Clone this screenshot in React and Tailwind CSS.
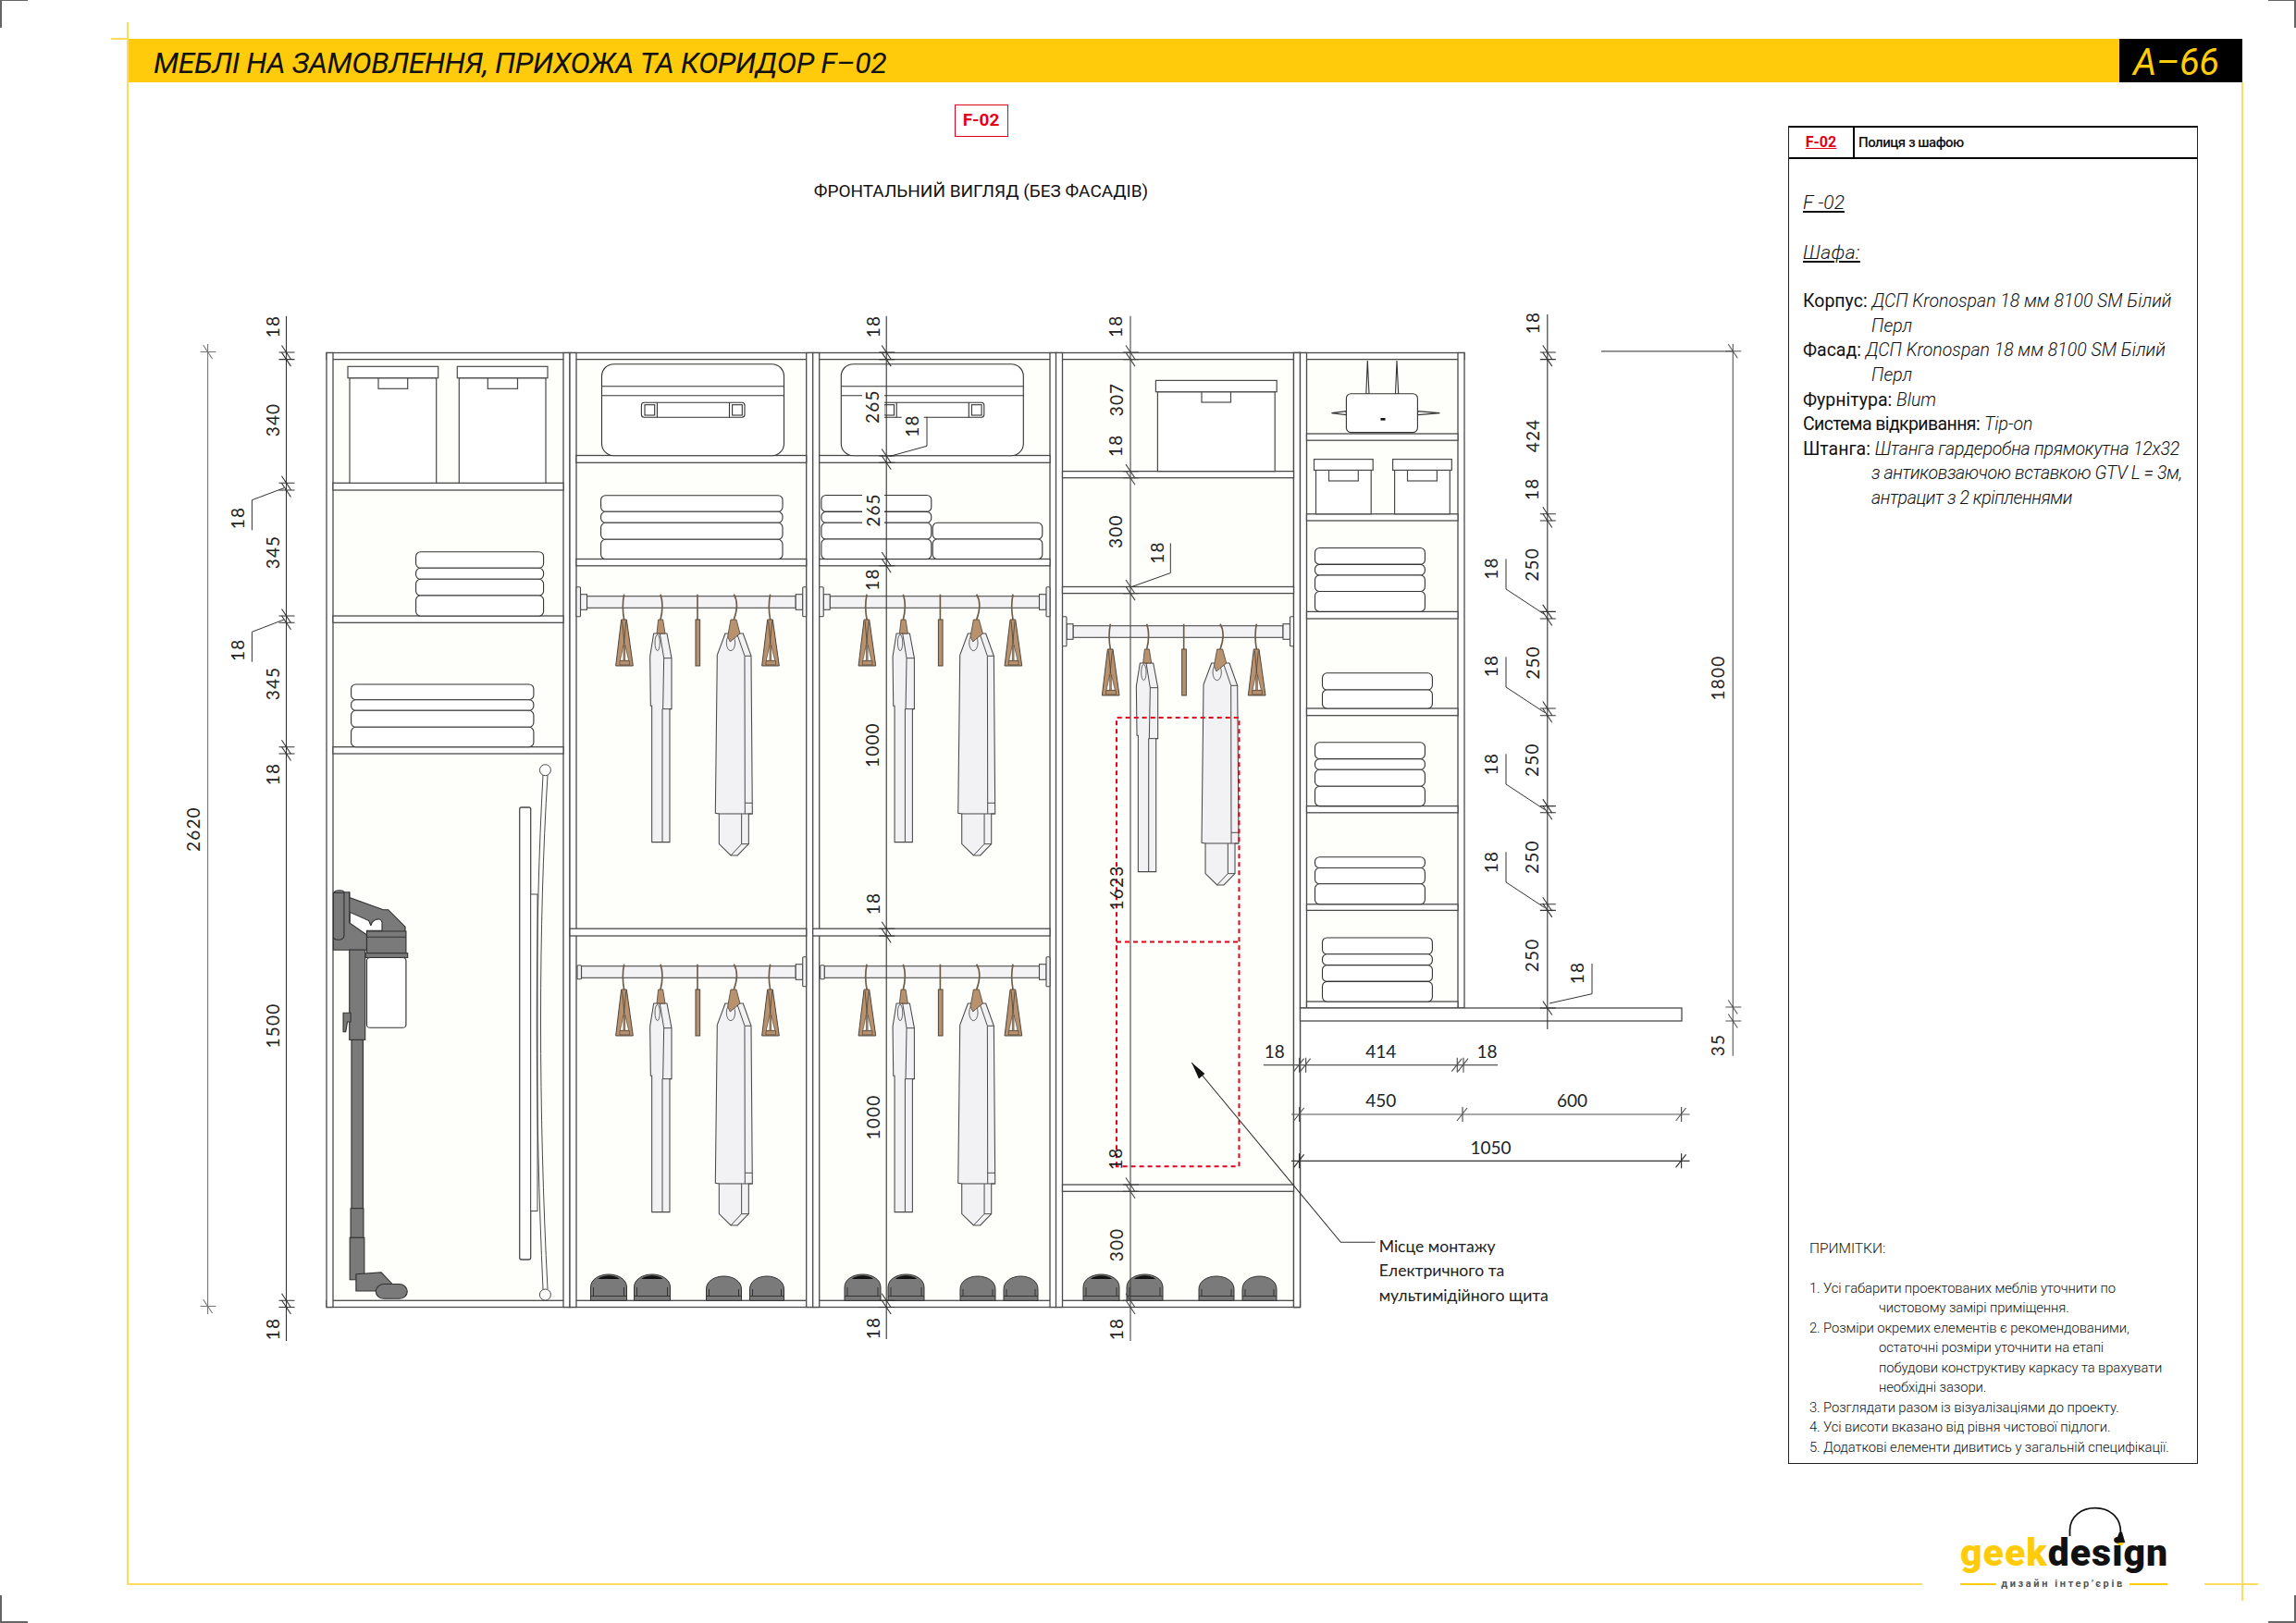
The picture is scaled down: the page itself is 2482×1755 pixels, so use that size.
const INK = '#4a4a4a';
const CREAM = '#fefefa';

const notes = [
  ['1. Усі габарити проектованих меблів уточнити по', 'чистовому замірі приміщення.'],
  ['2. Розміри окремих елементів є рекомендованими,', 'остаточні розміри уточнити на етапі', 'побудови конструктиву каркасу та врахувати', 'необхідні зазори.'],
  ['3. Розглядати разом із візуалізаціями до проекту.'],
  ['4. Усі висоти вказано від рівня чистової підлоги.'],
  ['5. Додаткові елементи дивитись у загальній специфікації.'],
];

const Panel = ({ x1, x2, y1, y2 }) => (
  <rect x={x1} y={y1} width={x2 - x1} height={y2 - y1} fill="#fff" stroke={INK} strokeWidth="1.3" />
);

// shelf between two side panels
const Shelf = ({ x1, x2, y1, y2 }) => <Panel x1={x1} x2={x2} y1={y1} y2={y2} />;

const Towels = ({ x1, x2, ys }) => (
  <g fill="#fff" stroke="#333" strokeWidth="1.1">
    {ys.slice(0, -1).map((y, i) => (
      <rect key={i} x={x1} y={y} width={x2 - x1} height={ys[i + 1] - y} rx="5" />
    ))}
  </g>
);

const Box = ({ x1, x2, top, lidBottom, tabBottom, bottom, tabA, tabB }) => (
  <g fill="#fff" stroke={INK} strokeWidth="1.2">
    <rect x={x1 + 2} y={lidBottom} width={x2 - x1 - 4} height={bottom - lidBottom} />
    <rect x={tabA} y={lidBottom} width={tabB - tabA} height={tabBottom - lidBottom} />
    <rect x={x1} y={top} width={x2 - x1} height={lidBottom - top} />
  </g>
);

const Suitcase = ({ dx }) => (
  <g transform={`translate(${dx} 0)`} fill="#fff" stroke="#333" strokeWidth="1.1">
    <rect x="650.5" y="393.7" width="197" height="99" rx="13" />
    <path d="M650.5 417.7H847.5M650.5 427.7H847.5" />
    <rect x="693.4" y="435.3" width="111.6" height="16" rx="3" />
    <path d="M710.4 435.3V451.3M788.5 435.3V451.3" />
    <rect x="697" y="437.7" width="10.7" height="11.3" />
    <rect x="791.6" y="437.7" width="10.7" height="11.3" />
  </g>
);

const Rail = ({ L, R, y, plain }) => (
  <g fill="#f3f3f5" stroke={INK} strokeWidth="1.1">
    {plain ? (
      <>
        <rect x={L + 5.5} y={y} width={R - L - 17} height="12.6" />
        <rect x={L + 1} y={y - 1} width="4.5" height="15" rx="1" />
      </>
    ) : (
      <>
        <rect x={L + 11.5} y={y} width={R - L - 23} height="12.6" />
        <rect x={L + 4.5} y={y - 2} width="7" height="16.6" />
        <rect x={L} y={y - 10} width="4.5" height="32" rx="1" />
      </>
    )}
    <rect x={R - 11.5} y={y - 2} width="7.5" height="16.6" />
    <rect x={R - 4} y={y - 10} width="4" height="32" rx="1" />
  </g>
);

const Wishbone = ({ x }) => (
  <g transform={`translate(${x} 0)`}>
    <path d="M0 68C-5 92-6 118 0 150" fill="none" stroke="#6f5c48" strokeWidth="5" />
    <path d="M-9 150H8L29 300H-27Z" fill="#b8926f" stroke="#4f4438" strokeWidth="3" />
    <path d="M-13 283H-2L-2 232ZM3 283H15L3 232Z" fill={CREAM} stroke="#4f4438" strokeWidth="2" />
    <path d="M-14 284H18V297H-14Z" fill="#b8926f" stroke="#4f4438" strokeWidth="2" />
    <path d="M-6 155L1 230M6 155L-1 230" fill="none" stroke="#4f4438" strokeWidth="2.5" />
  </g>
);

// one hanging set, drawn in 3x coordinates around the upper rail of column 2
const Hangers = ({ dx, dy }) => (
  <g transform={`translate(${640 + dx} ${620 + dy}) scale(0.3333)`}>
    <Wishbone x={104} />
    <path d="M222 68C230 92 230 118 222 150" fill="none" stroke="#6f5c48" strokeWidth="5" />
    <path d="M200 195L188 270 190 430H194V872H252V440H258V275L243 195Z" fill="#f2f2f4" stroke={INK} strokeWidth="3.2" />
    <path d="M220 195L233 275 230 440M228 440V872M233 275H258M228 440H258" fill="none" stroke={INK} strokeWidth="3" />
    <ellipse cx="212" cy="225" rx="8" ry="26" fill="#f2f2f4" stroke={INK} strokeWidth="2.5" />
    <path d="M215 150H230L237 195H210Z" fill="#b8926f" stroke="#4f4438" strokeWidth="2.5" />
    <path d="M342 68V150" stroke="#6f5c48" strokeWidth="5" />
    <rect x="336" y="150" width="14" height="150" fill="#b8926f" stroke="#4f4438" strokeWidth="3" />
    <path d="M460 68C474 92 472 118 460 150" fill="none" stroke="#6f5c48" strokeWidth="5" />
    <path d="M432 195L406 265 400 778 412 780V878L450 915H472L508 878V780H520L516 268 490 195Z" fill="#f2f2f4" stroke={INK} strokeWidth="3.2" />
    <path d="M470 195L495 268 496 780M496 745H520M485 780V878L450 915M485 878H508M496 268H516M412 780H520" fill="none" stroke={INK} strokeWidth="3" />
    <ellipse cx="450" cy="225" rx="14" ry="26" fill="#f2f2f4" stroke={INK} strokeWidth="2.5" />
    <path d="M450 150H468L480 195 448 222 440 205Z" fill="#b8926f" stroke="#4f4438" strokeWidth="2.5" />
    <Wishbone x={578} />
  </g>
);

const Shoe = ({ x, w, top, black }) => (
  <g transform={`translate(${x} 0)`}>
    <path d={`M0 1406.3V${top + 14}C0 ${top + 5} ${w * 0.25} ${top} ${w / 2} ${top}S${w} ${top + 5} ${w} ${top + 14}V1406.3Z`} fill="#7a7a7a" stroke="#333" strokeWidth="1" />
    {black && <path d={`M${w * 0.2} ${top + 5}C${w * 0.35} ${top} ${w * 0.65} ${top} ${w * 0.8} ${top + 5}Z`} fill="#111" />}
    <path d={`M3 ${top + 14}V1401M${w - 3} ${top + 14}V1401M0 1401.5H${w}`} fill="none" stroke="#333" strokeWidth="1" />
  </g>
);

const Shoes = ({ x }) => (
  <>
    <Shoe x={x} w={39} top={1378} black />
    <Shoe x={x + 47} w={39} top={1378} black />
    <Shoe x={x + 125} w={38} top={1380} />
    <Shoe x={x + 172} w={37} top={1380} />
  </>
);

const Vacuum = () => (
  <g transform="translate(180 850) scale(0.4464 0.3954)" stroke="#333" strokeWidth="2.6" fill="#7a7a7a">
    <path d="M404 292C410 282 428 284 430 290L443 290V305L525 338H537L578 385V400H485V448H404Z" />
    <path d="M444 345L490 368 495 382C497 366 518 356 522 372V395H485V407L444 375Z" fill="#fff" />
    <path d="M404 292H430V410C428 422 410 424 404 415M443 290V375" fill="none" />
    <rect x="443" y="448" width="38" height="246" />
    <path d="M428 620H446V645H438L434 672H428Z" />
    <rect x="448" y="694" width="28" height="461" />
    <rect x="446" y="1155" width="31" height="80" />
    <rect x="444" y="1235" width="35" height="115" />
    <path d="M459 1335L520 1330 547 1362 520 1381H459Z" />
    <rect x="507" y="1362" width="76" height="40" rx="20" />
    <rect x="485" y="397" width="95" height="60" />
    <path d="M485 413H580" fill="none" />
    <rect x="482" y="457" width="102" height="12" />
    <rect x="485" y="469" width="95" height="192" rx="8" fill="#fff" />
  </g>
);

const Mop = () => (
  <g fill="none" stroke={INK} strokeWidth="1">
    <rect x="561.7" y="873" width="12" height="489" rx="2" fill="#fff" strokeWidth="1.3" />
    <rect x="573.7" y="967" width="7.3" height="342.5" fill="#fff" />
    <path d="M587 838C578 1000 578 1200 587 1394M592 838C582 1000 582 1200 592 1394" />
    <circle cx="589.4" cy="832.7" r="6" fill="#fff" />
    <circle cx="589.4" cy="1400" r="6" fill="#fff" />
  </g>
);

// dimension text, rotated or flat, with optional knock-out behind it
const Dim = ({ x, y, children, flat, halo }) => {
  const len = String(children).length * 12 + 4;
  return (
    <g>
      {halo && <rect x={x - 11} y={y - len / 2} width="24" height={len} fill={CREAM} />}
      <text
        x={x}
        y={y}
        transform={flat ? undefined : `rotate(-90 ${x} ${y})`}
        textAnchor="middle"
        dominantBaseline="central"
        fontSize="19"
        letterSpacing={flat ? 0 : 1.2}
        fill="#222"
      >
        {children}
      </text>
    </g>
  );
};

const VDim = ({ x, y1, y2, ticks, stroke = '#333' }) => (
  <g stroke={stroke} strokeWidth="1.1" fill="none">
    <path d={`M${x} ${y1}V${y2}`} />
    {ticks.map((t) => (
      <path key={t} d={`M${x - 8} ${t}H${x + 9}M${x - 5} ${t - 7.5}L${x + 5} ${t + 7.5}`} />
    ))}
  </g>
);

const HDim = ({ y, x1, x2, ticks, stroke = '#333' }) => (
  <g stroke={stroke} strokeWidth="1.2" fill="none">
    <path d={`M${x1} ${y}H${x2}`} />
    {ticks.map((t) => (
      <path key={t} d={`M${t} ${y - 8}V${y + 8}M${t - 6} ${y + 7}L${t + 5} ${y - 7}`} />
    ))}
  </g>
);

const Leader = ({ d }) => <path d={d} fill="none" stroke="#333" strokeWidth="1" />;

const Drawing = () => (
  <svg viewBox="190 330 1710 1130" className="block h-[1130px] w-[1710px]" style={{ fontFamily: 'Lato, Roboto, sans-serif' }}>
    {/* carcass */}
    <rect x="353" y="381.5" width="1052.5" height="1032" fill={CREAM} />
    <rect x="1405.5" y="381.5" width="177.5" height="708.5" fill={CREAM} />
    <Panel x1={353} x2={1405.5} y1={381.5} y2={388.6} />
    <Panel x1={1405.5} x2={1583} y1={381.5} y2={388.6} />
    <Panel x1={353} x2={1405.5} y1={1406.3} y2={1413.5} />
    {[353, 609, 616, 871.7, 878.7, 1135, 1141.5, 1398.5].map((x) => (
      <Panel key={x} x1={x} x2={x + 7} y1={381.5} y2={1413.5} />
    ))}
    <Panel x1={1398.5} x2={1405.5} y1={381.5} y2={1413.5} />
    <Panel x1={1405.5} x2={1412.5} y1={381.5} y2={1090} />
    <Panel x1={1576} x2={1583} y1={381.5} y2={1090} />

    {/* shelves */}
    {[[522.3, 530], [666, 673.3], [807.7, 815]].map(([a, b]) => (
      <Shelf key={a} x1={360} x2={609} y1={a} y2={b} />
    ))}
    {[[492.5, 500.3], [604.5, 611.8]].map(([a, b]) => (
      <g key={a}>
        <Shelf x1={623} x2={871.7} y1={a} y2={b} />
        <Shelf x1={885.7} x2={1135} y1={a} y2={b} />
      </g>
    ))}
    <Shelf x1={616} x2={871.7} y1={1004.2} y2={1012} />
    <Shelf x1={878.7} x2={1135} y1={1004.2} y2={1012} />
    {[[509.6, 516.7], [634.5, 641.6], [1281, 1288.3]].map(([a, b]) => (
      <Shelf key={a} x1={1148.5} x2={1398.5} y1={a} y2={b} />
    ))}
    {[[469, 476.2], [555.8, 563], [661.4, 669], [766, 773.7], [871.6, 878.8], [977.8, 984.4], [1083, 1090]].map(([a, b]) => (
      <Shelf key={a} x1={1412.5} x2={1576} y1={a} y2={b} />
    ))}
    <Panel x1={1405.5} x2={1818} y1={1090} y2={1104} />

    {/* column 1 */}
    <Box x1={376} x2={473.7} top={396.3} lidBottom={408.7} tabBottom={420.3} bottom={522.3} tabA={409} tabB={440.7} />
    <Box x1={494.3} x2={592} top={396.3} lidBottom={408.7} tabBottom={420.3} bottom={522.3} tabA={527.3} tabB={559.5} />
    <Towels x1={449.6} x2={587.6} ys={[596.7, 614.3, 626.3, 644, 666]} />
    <Towels x1={379.6} x2={576.9} ys={[740, 756.7, 768.3, 786.3, 807.7]} />
    <Mop />
    <Vacuum />

    {/* columns 2 and 3 */}
    <Suitcase dx={0} />
    <Suitcase dx={258.8} />
    <Towels x1={649.6} x2={846} ys={[535.7, 553.3, 565.3, 583.3, 604.5]} />
    <Towels x1={887.9} x2={1006.8} ys={[535.5, 553.4, 565.3, 583, 604.5]} />
    <Towels x1={1008.2} x2={1126.8} ys={[565.3, 583, 604.5]} />
    <Rail L={623} R={871.7} y={644.7} />
    <Rail L={885.7} R={1135} y={644.7} />
    <Rail L={623} R={871.7} y={1044.7} plain />
    <Rail L={885.7} R={1135} y={1044.7} plain />
    <Hangers dx={0} dy={0} />
    <Hangers dx={262.4} dy={0} />
    <Hangers dx={0} dy={400} />
    <Hangers dx={262.4} dy={400} />

    {/* column 4 */}
    <Box x1={1249.4} x2={1380.2} top={411.4} lidBottom={423.7} tabBottom={435} bottom={509.6} tabA={1299} tabB={1330.5} />
    <Rail L={1148.5} R={1398.5} y={676.7} />
    <Hangers dx={525.7} dy={32} />

    {/* column 5 */}
    <g fill="#fff" stroke="#333" strokeWidth="1.1">
      <path d="M1476.8 426L1478.3 390 1480 426ZM1508.5 426L1510 390 1511.7 426ZM1455.4 444.6L1439.5 446.6 1455.4 448.6ZM1532.5 444.6L1556.4 446.6 1532.5 448.6Z" />
      <rect x="1455.4" y="425.7" width="77" height="41.9" rx="5" />
    </g>
    <rect x="1492.5" y="452" width="5" height="2.6" fill="#111" />
    <Box x1={1420.5} x2={1484.2} top={496.6} lidBottom={508.4} tabBottom={520} bottom={555.8} tabA={1436.5} tabB={1468.3} />
    <Box x1={1505.6} x2={1569.3} top={496.6} lidBottom={508.4} tabBottom={520} bottom={555.8} tabA={1521.5} tabB={1553.4} />
    <Towels x1={1421.5} x2={1540.4} ys={[592.5, 610.4, 622, 639.5, 661.4]} />
    <Towels x1={1429.5} x2={1548.4} ys={[727.8, 746, 766]} />
    <Towels x1={1421.5} x2={1540.4} ys={[802.8, 820.6, 832.3, 850.2, 871.6]} />
    <Towels x1={1421.5} x2={1540.4} ys={[926.7, 938.5, 955.8, 977.8]} />
    <Towels x1={1429.5} x2={1548.4} ys={[1014, 1031.8, 1043.6, 1061.4, 1083]} />

    {/* shoes */}
    <Shoes x={638.5} />
    <Shoes x={913} />
    <Shoes x={1171} />

    {/* panel niche marked in red */}
    <path d="M1207 1261.3V776H1339.5V1261.3ZM1207 1018.6H1339.5" fill="none" stroke="#e4001b" strokeWidth="2" strokeDasharray="5 4" />

    {/* dimensions: left */}
    <VDim x={224.6} y1={372} y2={1421} ticks={[380.5, 1412.5]} stroke="#777" />
    <VDim x={309.5} y1={341.7} y2={1450} ticks={[381, 388.6, 522.3, 530, 666, 673.3, 807.7, 815, 1406.3, 1413.5]} />
    <Leader d="M307 527.7L272.4 540.7V573.3" />
    <Leader d="M307 670L272.4 683.3V715.7" />
    <Dim x={209} y={896.6}>2620</Dim>
    <Dim x={294} y={353}>18</Dim>
    <Dim x={294} y={454}>340</Dim>
    <Dim x={294} y={597}>345</Dim>
    <Dim x={294} y={739}>345</Dim>
    <Dim x={294} y={837}>18</Dim>
    <Dim x={294} y={1109}>1500</Dim>
    <Dim x={294} y={1437}>18</Dim>
    <Dim x={256.8} y={560}>18</Dim>
    <Dim x={256.8} y={702.7}>18</Dim>

    {/* column 3 */}
    <VDim x={958.2} y1={341.7} y2={1448} ticks={[381, 388.6, 493, 500.3, 604.5, 611.8, 1004.2, 1012, 1406.3, 1413.5]} />
    <Leader d="M961.8 493.4L1002 482.3V450.7" />
    <Dim x={943} y={353}>18</Dim>
    <Dim x={943} y={439.6} halo>265</Dim>
    <Dim x={943} y={551.5} halo>265</Dim>
    <Dim x={943} y={626.6}>18</Dim>
    <Dim x={943} y={805.6}>1000</Dim>
    <Dim x={943} y={977}>18</Dim>
    <Dim x={943} y={1208}>1000</Dim>
    <Dim x={943} y={1436}>18</Dim>
    <Dim x={985.7} y={460.6} halo>18</Dim>

    {/* column 4 */}
    <VDim x={1222} y1={341.7} y2={1450} ticks={[381, 388.6, 509.6, 516.7, 634.5, 641.6, 1281, 1288.3, 1406.3, 1413.5]} stroke="#444" />
    <Leader d="M1222 635L1265.3 619.6V587.4" />
    <Dim x={1206} y={352.8}>18</Dim>
    <Dim x={1206} y={432}>307</Dim>
    <Dim x={1206} y={481.8}>18</Dim>
    <Dim x={1206} y={574.7}>300</Dim>
    <Dim x={1206} y={960}>1623</Dim>
    <Dim x={1206} y={1252.7}>18</Dim>
    <Dim x={1206} y={1346}>300</Dim>
    <Dim x={1206} y={1437}>18</Dim>
    <Dim x={1250.4} y={597.6}>18</Dim>

    {/* column 5 */}
    <VDim x={1672.8} y1={340} y2={1113} ticks={[381, 388.6, 555.8, 563, 661.4, 669, 766, 773.7, 871.6, 878.8, 977.8, 984.4, 1090]} />
    {[0, 106, 211, 317].map((o) => (
      <Leader key={o} d={`M1628 ${604.3 + o}V${637 + o}L1669.8 ${664.5 + o}`} />
    ))}
    <Leader d="M1674.8 1085L1721 1074.7V1042" />
    <Dim x={1656} y={349}>18</Dim>
    <Dim x={1656} y={471}>424</Dim>
    <Dim x={1656} y={528.8}>18</Dim>
    <Dim x={1656} y={610.4}>250</Dim>
    <Dim x={1656} y={716.5}>250</Dim>
    <Dim x={1656} y={821.6}>250</Dim>
    <Dim x={1656} y={926.7}>250</Dim>
    <Dim x={1656} y={1032.8}>250</Dim>
    <Dim x={1611.6} y={614.5}>18</Dim>
    <Dim x={1611.6} y={720}>18</Dim>
    <Dim x={1611.6} y={826}>18</Dim>
    <Dim x={1611.6} y={932}>18</Dim>
    <Dim x={1704.6} y={1052}>18</Dim>

    {/* overall height */}
    <g stroke="#555" strokeWidth="1.2" fill="none">
      <path d="M1731 379.8H1873.3" />
    </g>
    <VDim x={1873.3} y1={372} y2={1141.7} ticks={[379.8, 1089, 1104]} stroke="#555" />
    <Dim x={1856} y={733}>1800</Dim>
    <Dim x={1856} y={1130}>35</Dim>

    {/* horizontal dimensions */}
    <HDim y={1151.7} x1={1365.8} x2={1619} ticks={[1404.6, 1411.6, 1575.3, 1582]} stroke="#555" />
    <HDim y={1205} x1={1396} x2={1826.5} ticks={[1404.6, 1581, 1817.6]} stroke="#555" />
    <HDim y={1255.3} x1={1396} x2={1826.5} ticks={[1404.6, 1817.6]} />
    <Dim flat x={1377.8} y={1136}>18</Dim>
    <Dim flat x={1492.7} y={1136}>414</Dim>
    <Dim flat x={1607.6} y={1136}>18</Dim>
    <Dim flat x={1492.7} y={1189}>450</Dim>
    <Dim flat x={1699.6} y={1189}>600</Dim>
    <Dim flat x={1611.6} y={1240}>1050</Dim>

    {/* callout */}
    <path d="M1288.2 1149L1449.4 1343.3H1486.7" fill="none" stroke="#333" strokeWidth="1.1" />
    <path d="M1288.2 1149L1302.4 1161 1296 1166.4Z" fill="#111" />
    <g fontSize="17.6" fill="#222">
      <text x="1490.7" y="1354">Місце монтажу</text>
      <text x="1490.7" y="1380">Електричного та</text>
      <text x="1490.7" y="1407">мультимідійного щита</text>
    </g>
  </svg>
);

const Logo = () => (
  <div className="relative ml-[186px] mt-[46px] h-[100px] w-[224px]">
    <svg viewBox="0 0 224 100" className="absolute left-0 top-0 h-[100px] w-[224px]">
      <path d="M118.5 32V26C118.5 10 132 1.7 146 1.7S173.5 10 173.5 28" fill="none" stroke="#111" strokeWidth="1.8" />
      <path d="M172 27.7H175L178.3 39H167.7Z" fill="#111" />
      <path d="M168.5 39H177.5L175 42H171Z" fill="#ffcb0a" />
    </svg>
    <div className="absolute left-0 top-[27px] flex text-[41px] font-black leading-[46px] tracking-[1px]" style={{ fontFamily: 'Roboto, sans-serif' }}>
      <span className="text-[#ffcb0a]">geek</span>
      <span className="text-[#111]">design</span>
    </div>
    <div className="absolute left-0 top-[77px] flex w-[224px] items-center justify-between">
      <span className="h-[1.5px] w-[39px] bg-[#ffcb0a]" />
      <span className="whitespace-nowrap text-[11px] font-bold leading-[14px] tracking-[2.6px] text-[#555]">дизайн інтер’єрів</span>
      <span className="h-[1.5px] w-[41px] bg-[#ffcb0a]" />
    </div>
  </div>
);

const App = () => (
  <div className="relative h-[1755px] w-[2482px] overflow-hidden bg-white font-['Roboto',sans-serif] text-[#111]">
    {/* sheet frame and crop marks */}
    <div className="absolute left-0 top-0 h-[30px] w-[30px] border-l-2 border-t border-[#666]" />
    <div className="absolute right-0 top-0 h-[30px] w-[30px] border-r-2 border-t border-[#666]" />
    <div className="absolute bottom-0 left-0 h-[30px] w-[30px] border-b-2 border-l-2 border-[#666]" />
    <div className="absolute bottom-0 right-0 h-[30px] w-[30px] border-b-2 border-r-2 border-[#666]" />
    <div className="absolute left-[137px] top-[24px] h-[1689px] w-[2px] bg-[#fedb5e]" />
    <div className="absolute left-[120px] top-[41px] h-[2px] w-[18px] bg-[#fedb5e]" />
    <div className="absolute left-[137px] top-[1712px] h-[2px] w-[1941px] bg-[#fedb5e]" />
    <div className="absolute left-[2383px] top-[1712px] h-[2px] w-[58px] bg-[#fedb5e]" />
    <div className="absolute left-[2423px] top-[89px] h-[1642px] w-[2px] bg-[#fedb5e]" />

    <div className="flex h-full flex-col pl-[138px] pr-[58px] pt-[42px]">
      <header className="flex h-[47px] items-stretch justify-between bg-[#ffcb0a]">
        <h1 className="pl-[28px] pt-[3px] text-[32px] font-normal italic leading-[47px] tracking-[-0.4px] text-[#111]">
          МЕБЛІ НА ЗАМОВЛЕННЯ, ПРИХОЖА ТА КОРИДОР F–02
        </h1>
        <div className="w-[133px] bg-black pl-[15px] pt-[3px] text-[40px] italic leading-[46px] tracking-[-0.5px] text-[#ffcb0a]">А–66</div>
      </header>

      <div className="flex flex-1">
        <main className="flex w-[1795px] flex-col items-center pl-[50px]">
          <div className="mt-[24px] flex h-[35px] w-[58px] items-center justify-center border border-[#e4001b] text-[19px] font-bold text-[#e4001b]">F-02</div>
          <h2 className="mt-[47px] text-[19px] font-normal leading-[24px]">ФРОНТАЛЬНИЙ ВИГЛЯД (БЕЗ ФАСАДІВ)</h2>
          <div className="mt-[111px] self-start pl-[2px]">
            <Drawing />
          </div>
        </main>

        <aside className="w-[443px]">
          <div className="mt-[47px] flex h-[1447px] flex-col justify-between border border-[#222]">
            <div>
              <div className="flex h-[35px] border-b-2 border-t border-black">
                <div className="flex w-[71px] items-center justify-center border-r-2 border-black text-[16px] font-bold text-[#e4001b] underline">F-02</div>
                <div className="flex items-center pl-[4px] text-[15px] font-medium tracking-[-0.5px]">Полиця з шафою</div>
              </div>
              <div className="px-[15px] pt-[34px] text-[19.5px] leading-[26.6px]">
                <p className="text-[21px] font-[350] italic underline">F -02</p>
                <p className="mt-[27px] text-[21px] font-[350] italic tracking-[0.4px] underline">Шафа:</p>
                <div className="mt-[27px] whitespace-nowrap">
                  <p>Корпус: <i className="font-[350]">ДСП Kronospan 18 мм 8100 SM Білий</i></p>
                  <p className="pl-[74px] font-[350] italic">Перл</p>
                  <p>Фасад: <i className="font-[350]">ДСП Kronospan 18 мм 8100 SM Білий</i></p>
                  <p className="pl-[74px] font-[350] italic">Перл</p>
                  <p>Фурнітура: <i className="font-[350]">Blum</i></p>
                  <p><span className="tracking-[-0.6px]">Система відкривання:</span> <i className="font-[350]">Tip-on</i></p>
                  <p>Штанга: <i className="font-[350] tracking-[-0.2px]">Штанга гардеробна прямокутна 12х32</i></p>
                  <p className="pl-[74px] font-[350] italic tracking-[-0.4px]">з антиковзаючою вставкою GTV L = 3м,</p>
                  <p className="pl-[74px] font-[350] italic tracking-[-0.4px]">антрацит з 2 кріпленнями</p>
                </div>
              </div>
            </div>
            <div className="pb-[6px] pl-[22px] text-[14.8px] font-light leading-[21.5px] tracking-[-0.1px]">
              <p className="text-[15.5px] tracking-normal">ПРИМІТКИ:</p>
              <div className="mt-[21.5px]">
                {notes.map((lines) =>
                  lines.map((line, i) => (
                    <p key={line} className={i > 0 ? 'pl-[75px]' : ''}>{line}</p>
                  ))
                )}
              </div>
            </div>
          </div>
          <Logo />
        </aside>
      </div>
    </div>
  </div>
);

export default App;
